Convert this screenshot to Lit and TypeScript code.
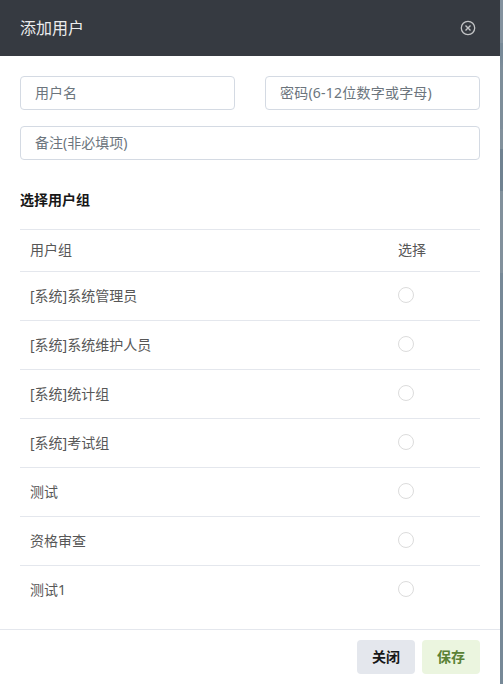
import { LitElement, html, css } from "lit";
import { customElement, state } from "lit/decorators.js";

@customElement("app-root")
class AppRoot extends LitElement {
  static styles = css`
    :host {
      display: flex;
      box-sizing: border-box;
      width: 503px;
      height: 684px;
      overflow: hidden;
      font: 14px/20px "Noto Sans", "Noto Sans CJK SC", sans-serif;
      color: #575757;
    }
    .dialog {
      display: flex;
      flex-direction: column;
      width: 500px;
      background: #fff;
    }
    .backdrop {
      flex: 1;
      background: linear-gradient(
        #83929e 0 43px, #778997 43px 56px, #7e8e9a 68px, #7e8e9a 129px,
        #82919c 129px 149px, #708291 149px 191px, #82919c 191px 273px,
        #778997 273px
      );
    }
    header {
      display: flex;
      align-items: center;
      justify-content: space-between;
      height: 56px;
      box-sizing: border-box;
      padding: 0 24px 0 20px;
      background: #363a41;
      color: #ebebec;
      font-size: 16px;
    }
    .close {
      display: flex;
      padding: 0;
      border: 0;
      background: none;
      color: #c3c4c6;
    }
    main {
      flex: 1;
      padding: 20px 20px 0;
    }
    .fields {
      display: grid;
      grid-template-columns: 1fr 1fr;
      gap: 16px 30px;
    }
    input.field {
      box-sizing: border-box;
      width: 100%;
      height: 34px;
      margin: 0;
      padding: 0 14px 2px;
      border: 1px solid #d4dae3;
      border-radius: 4px;
      background: #fff;
      font: inherit;
      outline: none;
    }
    .field::placeholder {
      color: #6c757d;
      opacity: 1;
    }
    .wide {
      grid-column: 1 / -1;
    }
    input.password {
      letter-spacing: 0.22px;
    }
    h2 {
      margin: 30px 0 19px;
      font-size: 14px;
      line-height: 20px;
      font-weight: 700;
      color: #171717;
    }
    .row {
      display: grid;
      grid-template-columns: 368px 1fr;
      align-items: center;
      height: 49px;
      box-sizing: border-box;
      padding: 0 10px;
      border-top: 1px solid #e4e7ed;
    }
    .row.head {
      height: 42px;
      padding-bottom: 2px;
    }
    .radio {
      appearance: none;
      box-sizing: border-box;
      width: 16px;
      height: 16px;
      margin: 0 0 2px;
      border: 1px solid #dcdcdc;
      border-radius: 50%;
      background: #fff;
    }
    .radio:checked {
      border: 5px solid #5c8a36;
    }
    footer {
      display: flex;
      justify-content: flex-end;
      gap: 7px;
      box-sizing: border-box;
      height: 55px;
      padding: 10px 20px;
      border-top: 1px solid #e4e7ed;
    }
    .btn {
      width: 58px;
      height: 34px;
      padding: 0;
      border: 0;
      border-radius: 4px;
      background: #e4e7ed;
      color: #171717;
      font: inherit;
      font-weight: 700;
    }
    .btn.save {
      background: #ebf5df;
      color: #5a8235;
    }
  `;

  @state() private selected = "";

  private groups = [
    "[系统]系统管理员",
    "[系统]系统维护人员",
    "[系统]统计组",
    "[系统]考试组",
    "测试",
    "资格审查",
    "测试1",
  ];

  render() {
    return html`
      <section class="dialog">
        <header>
          <span>添加用户</span>
          <button class="close" aria-label="关闭">
            <svg width="16" height="16" viewBox="0 0 16 16" fill="none" stroke="currentColor">
              <circle cx="8" cy="8" r="6.7" stroke-width="1.3" />
              <path d="M5.5 5.5l5 5M10.5 5.5l-5 5" stroke-width="1.4" />
            </svg>
          </button>
        </header>
        <main>
          <div class="fields">
            <input class="field" placeholder="用户名" />
            <input class="field password" placeholder="密码(6-12位数字或字母)" />
            <input class="field wide" placeholder="备注(非必填项)" />
          </div>
          <h2>选择用户组</h2>
          <div class="row head"><span>用户组</span><span>选择</span></div>
          ${this.groups.map(
            (g) => html`
              <label class="row">
                <span>${g}</span>
                <input
                  class="radio"
                  type="radio"
                  name="group"
                  .checked=${this.selected === g}
                  @change=${() => (this.selected = g)}
                />
              </label>
            `
          )}
        </main>
        <footer>
          <button class="btn">关闭</button>
          <button class="btn save">保存</button>
        </footer>
      </section>
      <div class="backdrop"></div>
    `;
  }
}
